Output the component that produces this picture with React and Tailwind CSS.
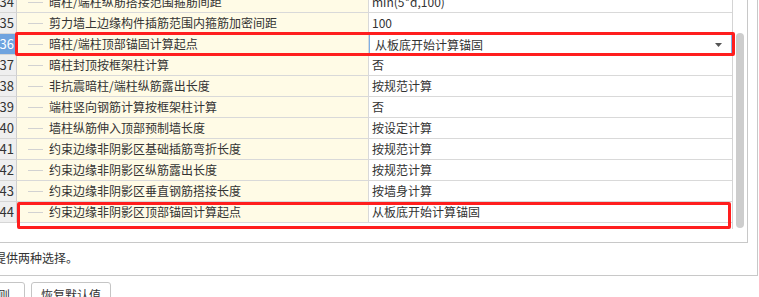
const rows = [
  { no: 34, name: "暗柱/端柱纵筋搭接范围箍筋间距", value: "min(5*d,100)" },
  { no: 35, name: "剪力墙上边缘构件插筋范围内箍筋加密间距", value: "100" },
  { no: 36, name: "暗柱/端柱顶部锚固计算起点", value: "从板底开始计算锚固", editing: true },
  { no: 37, name: "暗柱封顶按框架柱计算", value: "否" },
  { no: 38, name: "非抗震暗柱/端柱纵筋露出长度", value: "按规范计算" },
  { no: 39, name: "端柱竖向钢筋计算按框架柱计算", value: "否" },
  { no: 40, name: "墙柱纵筋伸入顶部预制墙长度", value: "按设定计算" },
  { no: 41, name: "约束边缘非阴影区基础插筋弯折长度", value: "按规范计算" },
  { no: 42, name: "约束边缘非阴影区纵筋露出长度", value: "按规范计算" },
  { no: 43, name: "约束边缘非阴影区垂直钢筋搭接长度", value: "按墙身计算" },
  { no: 44, name: "约束边缘非阴影区顶部锚固计算起点", value: "从板底开始计算锚固" },
];

const Row = ({ r }) => (
  <div className="flex h-[21px]">
    <div
      className={`w-[27px] flex items-center justify-end pr-[2px] text-[13px] border-r border-r-[#cfcfcf] border-b border-b-[#d6d6d6] ${
        r.editing ? "bg-[#6fa3df] text-white" : "bg-[#efefef] text-[#333]"
      }`}
    >
      {r.no}
    </div>
    <div className="w-[352px] flex items-center bg-[#fffbe6] border-r border-r-[#d9d9d9] border-b border-b-[#d9d9d9]">
      <span className="ml-[11px] mr-[6px] w-[15px] h-px bg-[#d2d2d2]" />
      <span className="whitespace-nowrap">{r.name}</span>
    </div>
    {r.editing ? (
      <div className="w-[363px] flex items-center justify-between border border-[#7eb0e6] pl-[5px] pr-[9px] bg-white">
        <span className="whitespace-nowrap">{r.value}</span>
        <svg width="7" height="4" viewBox="0 0 7 4">
          <path d="M0 0 L7 0 L3.5 4 Z" fill="#555" />
        </svg>
      </div>
    ) : (
      <div className="w-[363px] flex items-center pl-[3px] border-b border-b-[#d9d9d9] whitespace-nowrap">
        {r.value}
      </div>
    )}
  </div>
);

export default function App() {
  return (
    <div className="relative w-[759px] h-[297px] overflow-hidden bg-white text-[12px] text-[#333] font-['Noto_Sans_CJK_SC','Microsoft_YaHei',sans-serif]">
      <div className="-ml-[10px] -mt-[8px] w-[768px] border-r border-b border-[#c8c8c8]">
        <div className="w-[758px] border-r border-b border-[#c8c8c8] pb-[13px]">
          <div className="flex h-[237px]">
            <div className="w-[743px] border-r border-[#d4d4d4]">
              {rows.map((r) => (
                <Row key={r.no} r={r} />
              ))}
            </div>
            <div className="w-[14px] pl-[3px] pt-[41px]">
              <div className="w-[8px] h-[195px] rounded-full bg-[#cdcdcd]" />
            </div>
          </div>
        </div>
        <div className="pl-[4px] pt-[6px] pb-[8px] leading-[18px] whitespace-nowrap">提供两种选择。</div>
      </div>

      <div className="flex gap-[6px] mt-[6px]">
        <button className="-ml-[49px] h-[26px] pl-[10px] pr-[14px] border border-[#c5c5c5] rounded-[3px] bg-white leading-[16px] whitespace-nowrap">
          导入规则
        </button>
        <button className="w-[80px] h-[26px] border border-[#c5c5c5] rounded-[3px] bg-white leading-[16px] whitespace-nowrap">
          恢复默认值
        </button>
      </div>

      <div className="absolute left-[15px] top-[32px] w-[720px] h-[24px] border-[3px] border-[#ff1e1e] rounded-[2px]" />
      <div className="absolute left-[17px] top-[202px] w-[714px] h-[27px] border-[3px] border-[#ff1e1e] rounded-[2px]" />
    </div>
  );
}
